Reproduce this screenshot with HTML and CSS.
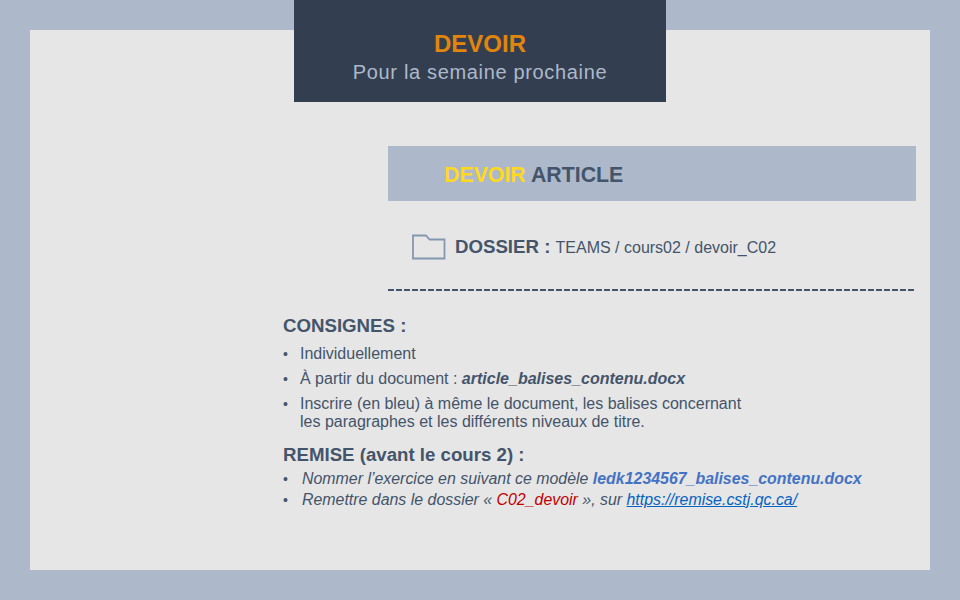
FILE: index.html
```html
<!DOCTYPE html>
<html lang="fr">
<head>
<meta charset="utf-8">
<title>Devoir</title>
<link rel="stylesheet" href="styles.css">
</head>
<body>
<main class="panel">
  <header class="head">
    <h1 class="head-title">DEVOIR</h1>
    <p class="head-sub">Pour la semaine prochaine</p>
  </header>
  <section class="article">
    <h2 class="banner"><span class="yellow">DEVOIR</span> ARTICLE</h2>
    <div class="folder-row">
      <svg class="folder" width="34" height="26" viewBox="0 0 34 26" aria-hidden="true">
        <path d="M1 1.5H14L17.5 5.5H32.5V24.5H1Z" fill="none" stroke="#8497b0" stroke-width="1.8"/>
      </svg>
      <p class="folder-text"><b class="folder-label">DOSSIER :</b> TEAMS / cours02 / devoir_C02</p>
    </div>
    <div class="dashes"></div>
  </section>
  <section class="body">
    <h3 class="title">CONSIGNES :</h3>
    <ul class="list">
      <li>Individuellement</li>
      <li>À partir du document : <b><i>article_balises_contenu.docx</i></b></li>
      <li>Inscrire (en bleu) à même le document, les balises concernant<br>les paragraphes et les différents niveaux de titre.</li>
    </ul>
    <h3 class="title remise-title">REMISE (avant le cours 2) :</h3>
    <ul class="list remise">
      <li><i>Nommer l’exercice en suivant ce modèle <b class="blue">ledk1234567_balises_contenu.docx</b></i></li>
      <li><i>Remettre dans le dossier « <span class="red">C02_devoir</span> », sur <a class="link" href="#">https://remise.cstj.qc.ca/</a></i></li>
    </ul>
  </section>
</main>
</body>
</html>
```
FILE: styles.css
```css
* { box-sizing: border-box; }
html, body { margin: 0; padding: 0; }
body {
  width: 960px;
  height: 600px;
  padding: 30px;
  background: #adb9ca;
  font-family: "Liberation Sans", Arial, sans-serif;
  color: #44546a;
  overflow: hidden;
}
.panel {
  width: 900px;
  height: 540px;
  background: #e6e6e6;
  display: flex;
  flex-direction: column;
}
.head {
  width: 372px;
  height: 102px;
  margin: -30px 0 0 264px;
  padding-top: 30px;
  background: #333f50;
  text-align: center;
}
.head-title {
  margin: 0;
  font-size: 24px;
  line-height: 28px;
  font-weight: bold;
  color: #e2850c;
}
.head-sub {
  margin: 0;
  font-size: 20px;
  line-height: 28px;
  letter-spacing: 0.66px;
  color: #adb9ca;
}
.article {
  margin: 44px 0 0 358px;
  width: 528px;
}
.banner {
  margin: 0;
  height: 55px;
  padding-left: 56px;
  background: #adb9ca;
  font-size: 21.33px;
  line-height: 58px;
  font-weight: bold;
  color: #44546a;
}
.yellow { color: #ffd91a; }
.folder-row {
  display: flex;
  align-items: center;
  gap: 9px;
  height: 26px;
  margin: 33px 0 0 24px;
}
.folder { flex: none; }
.folder-text {
  margin: 0;
  font-size: 16px;
  line-height: 26px;
}
.folder-label { font-size: 18.67px; margin-right: 1px; }
.dashes {
  height: 2px;
  margin-top: 29px;
  background: repeating-linear-gradient(90deg, #44546a 0 6px, transparent 6px 8px);
}
.body { margin: 24px 0 0 253px; }
.title {
  margin: 0;
  font-size: 18.67px;
  line-height: 22px;
  font-weight: bold;
}
.list {
  margin: 8px 0 0;
  padding: 0;
  list-style: none;
  font-size: 16px;
  line-height: 18px;
}
.list li {
  position: relative;
  padding-left: 17px;
  margin-bottom: 7px;
}
.list li::before {
  content: "•";
  position: absolute;
  left: 0;
  font-size: 14px;
}
.remise-title { margin-top: 13px; }
.remise { margin-top: 4px; font-size: 15.92px; }
.remise li { margin-bottom: 3px; padding-left: 19px; }
.blue { color: #4472c4; }
.red { color: #c00000; }
.link { color: #0563c1; text-decoration: underline; }
```
